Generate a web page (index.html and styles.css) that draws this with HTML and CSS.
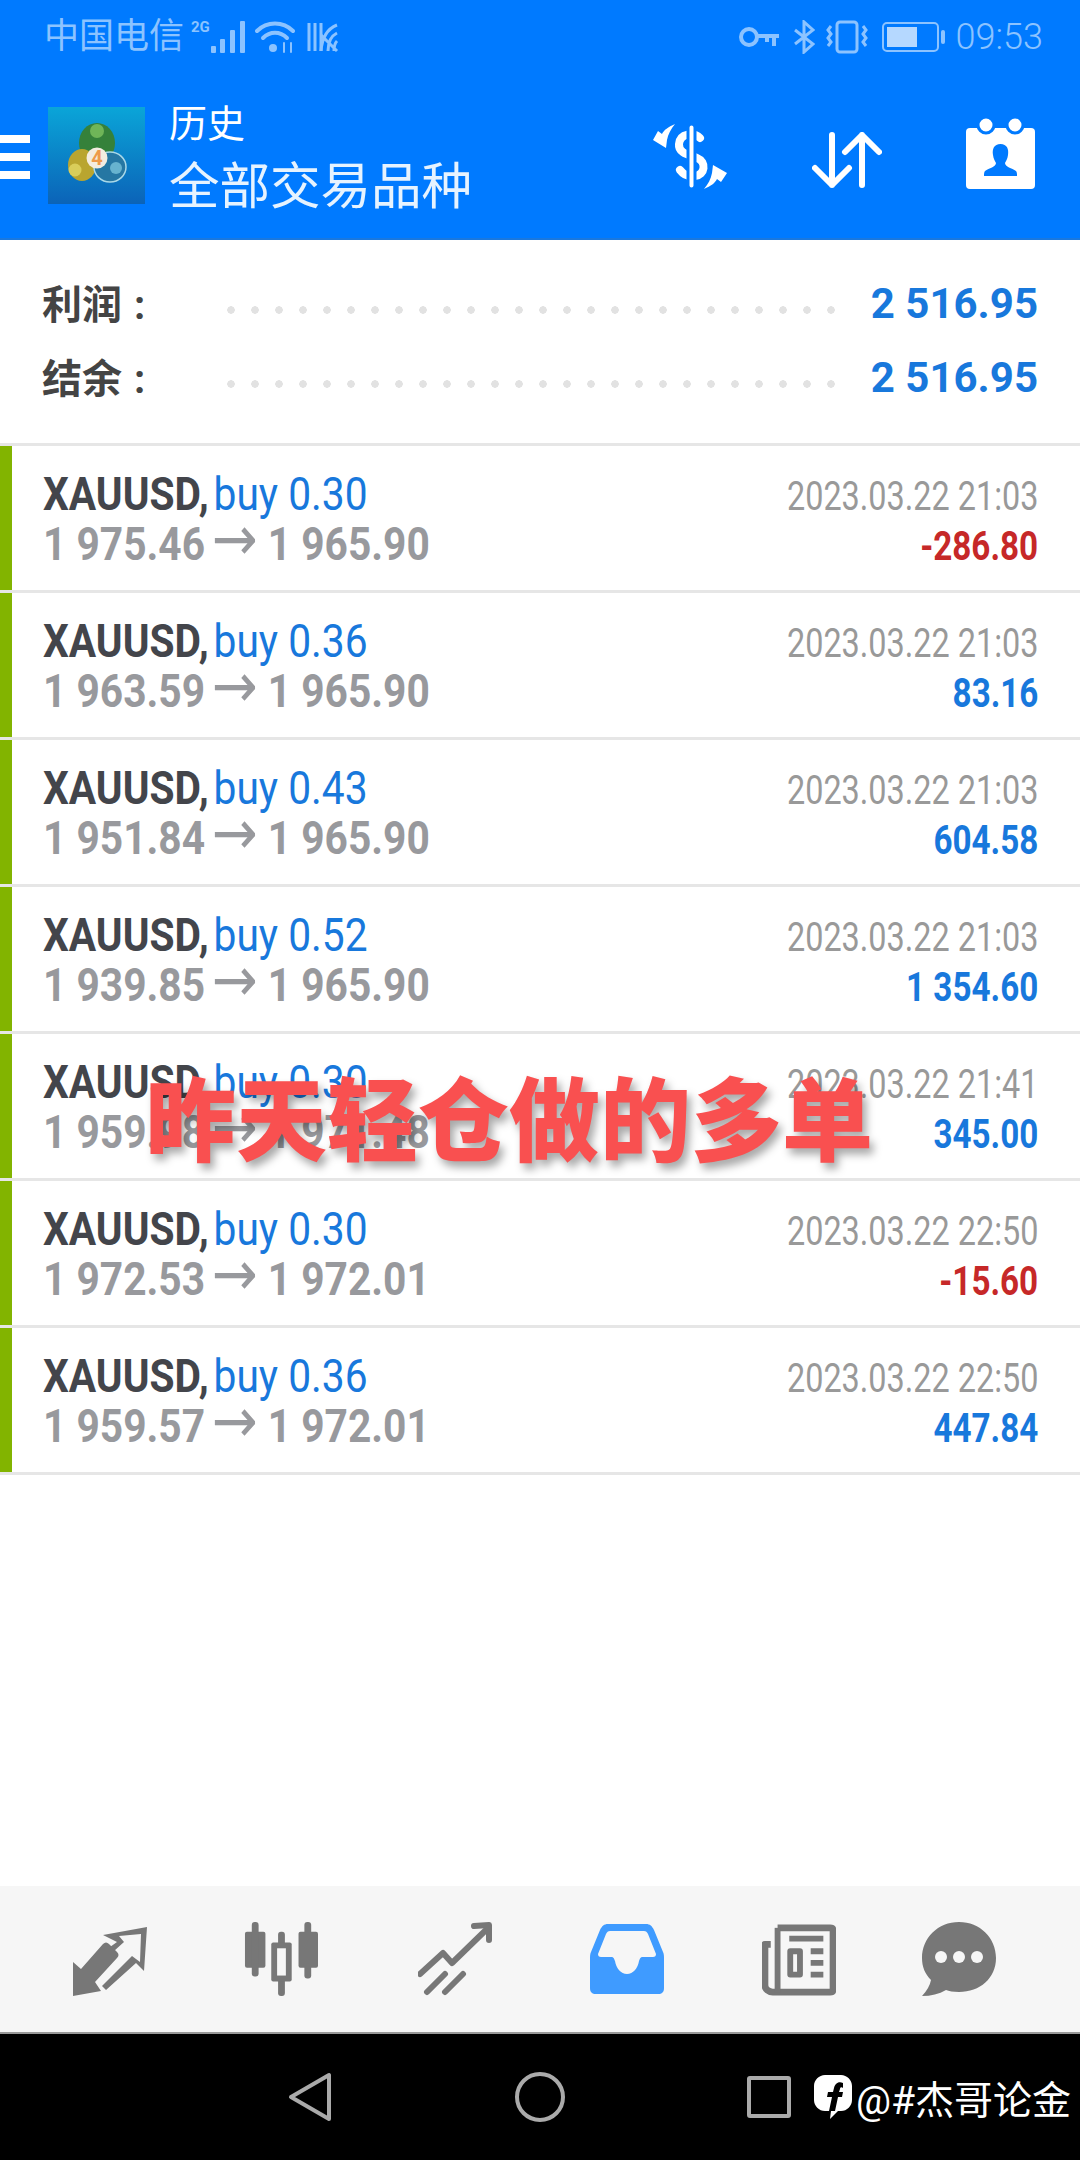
FILE: index.html
```html
<!DOCTYPE html>
<html lang="zh-CN">

<head>
    <meta charset="UTF-8">
    <meta name="viewport" content="width=device-width, initial-scale=1.0">
    <title>历史</title>
    <link rel="stylesheet" href="styles.css">
</head>

<body>
    <div class="phone">
        <!-- Barra de status -->
        <div class="status-bar">
            <div class="status-group">
                <span class="carrier">中国电信</span>
                <span class="net-type">2G</span>
                <svg class="st-signal" viewBox="0 0 34 32" fill="currentColor">
                    <rect x="0" y="25" width="5" height="7" rx="1" />
                    <rect x="9" y="18" width="5" height="14" rx="1" />
                    <rect x="19" y="9" width="5" height="23" rx="1" />
                    <rect x="29" y="0" width="5" height="32" rx="1" />
                </svg>
                <svg class="st-wifi" viewBox="0 0 42 34" fill="none" stroke="currentColor" stroke-width="4" stroke-linecap="round">
                    <path d="M2 11C12 1 28 1 38 11" />
                    <path d="M8 18C15 11 25 11 32 18" />
                    <circle cx="18" cy="28" r="4" fill="currentColor" stroke="none" />
                    <path d="M29 23v9M36 23v9" stroke-width="2" />
                </svg>
                <svg class="st-nfc" viewBox="0 0 32 32" fill="none" stroke="currentColor" stroke-width="3">
                    <path d="M2 2V30M8 2V30M14 2L14 30" />
                    <path d="M30 4C20 8 15 16 14 30M30 12C24 15 21 22 21 30M30 20C28 22 27 26 27 30M14 14L30 30" />
                </svg>
            </div>
            <div class="status-group status-right">
                <svg class="st-key" viewBox="0 0 42 22" fill="none" stroke="currentColor" stroke-width="4">
                    <circle cx="11" cy="11" r="8" />
                    <path d="M19 10H41M36 10V20M29 10V16" />
                </svg>
                <svg class="st-bt" viewBox="0 0 22 34" fill="none" stroke="currentColor" stroke-width="3">
                    <path d="M2 10L20 24L11 32V2L20 10L2 24" />
                </svg>
                <svg class="st-vib" viewBox="0 0 44 34" fill="none" stroke="currentColor" stroke-width="3">
                    <rect x="12" y="2" width="20" height="30" rx="3" />
                    <path d="M6 6l-3 4l3 4l-3 4l3 4l-3 4M38 6l3 4l-3 4l3 4l-3 4l3 4" />
                </svg>
                <div class="battery"><div class="battery-fill"></div></div>
                <span class="clock">09:53</span>
            </div>
        </div>

        <!-- Barra do app -->
        <header class="app-bar">
            <div class="menu-icon"><i></i><i></i><i></i></div>
            <svg class="app-logo" viewBox="0 0 97 97">
                <defs>
                    <linearGradient id="logo-bg" x1="0" y1="0" x2="0" y2="1">
                        <stop offset="0" stop-color="#0aa5d8" />
                        <stop offset="1" stop-color="#0b63b8" />
                    </linearGradient>
                </defs>
                <rect width="97" height="97" fill="url(#logo-bg)" />
                <ellipse cx="49" cy="36" rx="18" ry="20" fill="#35813a" />
                <circle cx="49" cy="24" r="7" fill="#6fb558" />
                <ellipse cx="34" cy="58" rx="14" ry="16" fill="#b9a52f" />
                <circle cx="27" cy="63" r="6.500" fill="#d9cd5a" />
                <ellipse cx="62" cy="60" rx="16" ry="15" fill="#2677a3" stroke="#a9d8e8" stroke-width="1.500" />
                <circle cx="68" cy="61" r="6" fill="#67b3cf" />
                <circle cx="49" cy="51" r="10.500" fill="#f3ece0" />
                <text class="logo-four" x="49" y="58" text-anchor="middle">4</text>
            </svg>
            <div class="app-titles">
                <div class="app-title-small">历史</div>
                <div class="app-title-big">全部交易品种</div>
            </div>
            <div class="app-actions">
                <svg class="act-dollar" viewBox="0 0 75 65" fill="#fff">
                    <path d="M47 14C41 8 27 9 26 20C25 29 36 31 44 34C54 38 52 51 42 52C35 53 30 50 27 46" fill="none" stroke="#fff" stroke-width="8" stroke-linecap="round" />
                    <rect x="35" y="0" width="7" height="65" rx="3.500" stroke="#007aff" stroke-width="3" />
                    <path d="M22 0C15 3 11 6 9 10L5 7L0 16L13 24L14 16C15 10 18 5 22 0Z" />
                    <path d="M51 65C58 62 62 59 64 55L68 58L74 49L60 41L59 49C58 55 55 60 51 65Z" />
                </svg>
                <svg class="act-sort" viewBox="0 0 70 56" fill="none" stroke="#fff" stroke-width="6" stroke-linecap="round" stroke-linejoin="round">
                    <path d="M20 3V53M3 36L20 53L37 36" />
                    <path d="M50 3V53M33 20L50 3L67 20" />
                </svg>
                <svg class="act-cal" viewBox="0 0 71 71" fill="#fff">
                    <rect x="1" y="10" width="69" height="61" rx="4" />
                    <circle cx="21" cy="7" r="8" stroke="#007aff" stroke-width="3" />
                    <circle cx="50" cy="7" r="8" stroke="#007aff" stroke-width="3" />
                    <path d="M35.500 26C42 26 44 31 43 37C42.500 41 41 43 40 45C40 49 47 50 51 53C52 54 52 56 52 58H19C19 56 19 54 20 53C24 50 31 49 31 45C30 43 28.500 41 28 37C27 31 29 26 35.500 26Z" fill="#007aff" />
                </svg>
            </div>
        </header>

        <!-- Resumo -->
        <section class="summary">
            <div class="summary-row">
                <span class="summary-label">利润 :</span>
                <span class="summary-dots"></span>
                <span class="summary-value">2 516.95</span>
            </div>
            <div class="summary-row">
                <span class="summary-label">结余 :</span>
                <span class="summary-dots"></span>
                <span class="summary-value">2 516.95</span>
            </div>
        </section>

        <!-- Lista de ordens -->
        <section class="deals">
            <div class="deal">
                <div class="deal-bar"></div>
                <div class="deal-body">
                    <div class="line"><span class="cond"><b class="symbol">XAUUSD,</b> <span class="side">buy 0.30</span></span><span class="cond-r date">2023.03.22 21:03</span></div>
                    <div class="line"><span class="cond price">1 975.46 <span class="arrow">→</span> 1 965.90</span><span class="cond-r pnl loss">-286.80</span></div>
                </div>
            </div>
            <div class="deal">
                <div class="deal-bar"></div>
                <div class="deal-body">
                    <div class="line"><span class="cond"><b class="symbol">XAUUSD,</b> <span class="side">buy 0.36</span></span><span class="cond-r date">2023.03.22 21:03</span></div>
                    <div class="line"><span class="cond price">1 963.59 <span class="arrow">→</span> 1 965.90</span><span class="cond-r pnl">83.16</span></div>
                </div>
            </div>
            <div class="deal">
                <div class="deal-bar"></div>
                <div class="deal-body">
                    <div class="line"><span class="cond"><b class="symbol">XAUUSD,</b> <span class="side">buy 0.43</span></span><span class="cond-r date">2023.03.22 21:03</span></div>
                    <div class="line"><span class="cond price">1 951.84 <span class="arrow">→</span> 1 965.90</span><span class="cond-r pnl">604.58</span></div>
                </div>
            </div>
            <div class="deal">
                <div class="deal-bar"></div>
                <div class="deal-body">
                    <div class="line"><span class="cond"><b class="symbol">XAUUSD,</b> <span class="side">buy 0.52</span></span><span class="cond-r date">2023.03.22 21:03</span></div>
                    <div class="line"><span class="cond price">1 939.85 <span class="arrow">→</span> 1 965.90</span><span class="cond-r pnl">1 354.60</span></div>
                </div>
            </div>
            <div class="deal">
                <div class="deal-bar"></div>
                <div class="deal-body">
                    <div class="line"><span class="cond"><b class="symbol">XAUUSD,</b> <span class="side">buy 0.30</span></span><span class="cond-r date">2023.03.22 21:41</span></div>
                    <div class="line"><span class="cond price">1 959.98 <span class="arrow">→</span> 1 971.48</span><span class="cond-r pnl">345.00</span></div>
                </div>
            </div>
            <div class="deal">
                <div class="deal-bar"></div>
                <div class="deal-body">
                    <div class="line"><span class="cond"><b class="symbol">XAUUSD,</b> <span class="side">buy 0.30</span></span><span class="cond-r date">2023.03.22 22:50</span></div>
                    <div class="line"><span class="cond price">1 972.53 <span class="arrow">→</span> 1 972.01</span><span class="cond-r pnl loss">-15.60</span></div>
                </div>
            </div>
            <div class="deal">
                <div class="deal-bar"></div>
                <div class="deal-body">
                    <div class="line"><span class="cond"><b class="symbol">XAUUSD,</b> <span class="side">buy 0.36</span></span><span class="cond-r date">2023.03.22 22:50</span></div>
                    <div class="line"><span class="cond price">1 959.57 <span class="arrow">→</span> 1 972.01</span><span class="cond-r pnl">447.84</span></div>
                </div>
            </div>
            <div class="overlay-text">昨天轻仓做的多单</div>
        </section>

        <!-- Navegação do app -->
        <nav class="tab-bar">
            <svg viewBox="0 0 74 74" fill="#777">
                <path d="M0 74L0 40L8 47L30 22C32 20 34 20 36 22L44 30C46 32 46 34 44 36L22 60L28 69Z" />
                <path d="M30 13L74 5L71 49L63 41L33 68L29 64L59 34L67 40L68 12L46 14L51 20L41 29L37 25L44 20Z" />
            </svg>
            <svg viewBox="0 0 76 76" fill="#777">
                <rect x="1" y="10" width="21" height="37" rx="2" />
                <rect x="8" y="0" width="7" height="56" rx="3" />
                <rect x="56" y="10" width="20" height="37" rx="2" />
                <rect x="62" y="0" width="7" height="58" rx="3" />
                <rect x="35" y="10" width="7" height="66" rx="3" />
                <rect x="28" y="21" width="21" height="40" rx="2" />
                <rect x="34" y="27" width="9" height="28" fill="#f6f6f6" />
            </svg>
            <svg viewBox="0 0 74 74" fill="none" stroke="#777" stroke-width="6" stroke-linecap="round" stroke-linejoin="round">
                <path d="M2 52L25 31L34 41L70 6" />
                <path d="M56 4L71 3V18" />
                <path d="M9 70L27 52M27 70L45 52" />
            </svg>
            <svg viewBox="0 0 74 70" fill="#3f9bff">
                <path d="M18 0H56C60 0 62 2 64 6L73 28C74 30 74 32 74 35V64C74 68 72 70 68 70H6C2 70 0 68 0 64V35C0 32 0 30 1 28L10 6C12 2 14 0 18 0Z" />
                <path d="M20 7H54C56 7 57 8 58 10L66 30C66 32 65 33 63 33H53C50 33 50 35 49 37C48 44 43 50 37 50C31 50 26 44 25 37C24 35 24 33 21 33H11C9 33 8 32 8 30L16 10C17 8 18 7 20 7Z" fill="#f6f6f6" />
            </svg>
            <svg viewBox="0 0 76 74" fill="none" stroke="#777" stroke-width="7" stroke-linejoin="round">
                <path d="M16 5H70C72 5 73 6 73 8V68C73 70 72 71 70 71H11C7 71 3 68 3 64V22H9" />
                <path d="M16 5V71" stroke-width="6" />
                <path d="M28 16H63" stroke-width="6" />
                <rect x="29" y="29" width="10" height="24" stroke-width="6" />
                <path d="M50 29H63M50 41H63M50 53H63" stroke-width="6" />
            </svg>
            <svg viewBox="0 0 74 74" fill="#777">
                <path d="M37 0C58 0 74 16 74 36C74 56 58 70 37 70C31 70 27 69 24 68C17 72 9 74 0 74C5 69 8 63 9 58C3 52 0 45 0 36C0 16 16 0 37 0Z" />
                <circle cx="19" cy="35" r="6" fill="#f6f6f6" />
                <circle cx="37" cy="35" r="6" fill="#f6f6f6" />
                <circle cx="55" cy="35" r="6" fill="#f6f6f6" />
            </svg>
        </nav>

        <!-- Navegação do sistema -->
        <div class="sys-bar">
            <svg class="sys-back" viewBox="0 0 44 50" fill="none" stroke="#aaa" stroke-width="4" stroke-linejoin="round">
                <path d="M41 3V47L3 25Z" />
            </svg>
            <div class="sys-home"></div>
            <div class="sys-recent"></div>
            <div class="watermark">
                <svg class="wm-icon" viewBox="0 0 38 44">
                    <path d="M11 0H27C33 0 38 5 38 11V25C38 31 33 36 27 36H24L16 44L17 36H11C5 36 0 31 0 25V11C0 5 5 0 11 0Z" fill="#fff" />
                    <path d="M29 8C24 6 21 9 20 13L19 17H14L13 22H18L15 36H21L24 22H28L29 17H25L26 14C26 12 28 12 29 13Z" fill="#000" />
                </svg>
                <span class="wm-text">@#杰哥论金</span>
            </div>
        </div>
    </div>
</body>

</html>
```

FILE: styles.css
```css
* {
    box-sizing: border-box;
}

body {
    margin: 0;
    background-color: #fff;
    font-family: Roboto, "Noto Sans CJK SC", sans-serif;
}

.phone {
    width: 1080px;
    height: 2160px;
    display: flex;
    flex-direction: column;
    overflow: hidden;
}

/* status bar */
.status-bar {
    height: 72px;
    padding: 2px 37px 0 44px;
    background-color: #007aff;
    color: #8cc3ff;
    display: flex;
    justify-content: space-between;
    align-items: center;
}

.status-group {
    display: flex;
    align-items: center;
}

.carrier {
    font-size: 35px;
    line-height: 40px;
}

.net-type {
    font-size: 15px;
    font-weight: 700;
    margin: 0 0 20px 7px;
}

.st-signal {
    width: 34px;
    height: 32px;
    margin: 0 10px 0 1px;
}

.st-wifi {
    width: 42px;
    height: 34px;
    margin-right: 10px;
}

.st-nfc {
    width: 32px;
    height: 32px;
}

.st-key {
    width: 42px;
    height: 22px;
    margin-right: 13px;
}

.st-bt {
    width: 22px;
    height: 34px;
    margin-right: 10px;
}

.st-vib {
    width: 44px;
    height: 34px;
    margin-right: 13px;
}

.battery {
    width: 57px;
    height: 30px;
    border: 2px solid #8cc3ff;
    border-radius: 5px;
    padding: 3px;
    margin-right: 17px;
    position: relative;
}

.battery::after {
    content: "";
    position: absolute;
    right: -8px;
    top: 6px;
    width: 4px;
    height: 14px;
    background-color: #8cc3ff;
    border-radius: 2px;
}

.battery-fill {
    width: 30px;
    height: 20px;
    background-color: #b5d8ff;
}

.clock {
    font-size: 36px;
    font-weight: 300;
}

/* app bar */
.app-bar {
    height: 168px;
    background-color: #007aff;
    border-bottom: 2px solid #1a78de;
    display: flex;
    align-items: flex-start;
    color: #fff;
}

.menu-icon {
    width: 30px;
    margin: 63px 18px 0 0;
    display: flex;
    flex-direction: column;
    gap: 10px;
}

.menu-icon i {
    display: block;
    height: 8px;
    background-color: #fff;
}

.app-logo {
    width: 97px;
    height: 97px;
    margin-top: 35px;
}

.logo-four {
    font-size: 20px;
    font-weight: 700;
    fill: #ee9a4a;
}

.app-titles {
    margin: 25px 0 0 24px;
}

.app-title-small {
    font-size: 38px;
    line-height: 54px;
    margin-bottom: 5px;
}

.app-title-big {
    font-size: 50.500px;
    line-height: 62px;
    color: #e6f3ff;
}

.app-actions {
    margin-left: auto;
    padding: 46px 44px 0 0;
    display: flex;
    align-items: flex-start;
}

.act-dollar {
    width: 75px;
    height: 65px;
    margin: 6px 84px 0 0;
}

.act-sort {
    width: 70px;
    height: 56px;
    margin: 14px 83px 0 0;
}

.act-cal {
    width: 71px;
    height: 71px;
}

/* resumo */
.summary {
    height: 206px;
    padding: 25px 42px 0;
    border-bottom: 3px solid #e6e6e6;
}

.summary-row {
    height: 74px;
    display: flex;
    align-items: center;
}

.summary-label {
    width: 177px;
    font-size: 40px;
    font-weight: 700;
    word-spacing: 2px;
    color: #444;
}

.summary-dots {
    width: 624px;
    height: 8px;
    margin-top: 15px;
    background-image: radial-gradient(circle, #e2e2e2 3.5px, transparent 4px);
    background-size: 24px 8px;
}

.summary-value {
    margin-left: auto;
    font-size: 42px;
    font-weight: 700;
    margin-top: 2px;
    color: #1878dc;
}

/* lista */
.deals {
    flex: 1;
    position: relative;
}

.deal {
    height: 147px;
    display: flex;
    border-bottom: 3px solid #e6e6e6;
}

.deal-bar {
    width: 12px;
    background-color: #82b400;
}

.deal-body {
    flex: 1;
    padding: 21px 42px 0 31px;
}

.line {
    height: 50px;
    display: flex;
    justify-content: space-between;
    align-items: baseline;
    white-space: nowrap;
}

.cond {
    display: inline-block;
    font-size: 46px;
    transform: scaleX(0.885);
    transform-origin: left center;
}

.cond-r {
    display: inline-block;
    transform-origin: right center;
}

.symbol {
    font-weight: 700;
    color: #43454b;
}

.side {
    margin-left: -6px;
    color: #1878dc;
}

.price {
    font-weight: 700;
    color: #98999d;
}

.arrow {
    margin-left: -4px;
    font-family: "DejaVu Sans", sans-serif;
    font-weight: 400;
    font-size: 62px;
    line-height: 0;
}

.date {
    font-size: 40px;
    color: #999;
    transform: scaleX(0.81);
}

.pnl {
    font-size: 40px;
    font-weight: 700;
    color: #1878dc;
    transform: scaleX(0.83);
}

.loss {
    color: #c62828;
}

.overlay-text {
    position: absolute;
    left: 145px;
    top: 627px;
    font-size: 91px;
    line-height: 100px;
    font-weight: 900;
    color: #f95050;
    text-shadow: 4px 6px 8px rgba(0, 0, 0, 0.35);
    white-space: nowrap;
}

/* tab bar */
.tab-bar {
    height: 146px;
    background-color: #f6f6f6;
    padding: 36px 0 0 73px;
    display: grid;
    grid-template-columns: 171px 174px 172px 172px 160px 74px;
    align-items: start;
}

.tab-bar svg {
    width: 74px;
    height: 74px;
}

/* barra do sistema */
.sys-bar {
    height: 128px;
    background-color: #000;
    border-top: 2px solid #999;
    display: flex;
    align-items: center;
    position: relative;
}

.sys-back {
    width: 44px;
    height: 50px;
    margin-left: 288px;
}

.sys-home {
    width: 50px;
    height: 50px;
    margin-left: 183px;
    border: 4px solid #aaa;
    border-radius: 50%;
}

.sys-recent {
    width: 44px;
    height: 42px;
    margin-left: 182px;
    border: 4px solid #aaa;
    border-radius: 3px;
}

.watermark {
    margin-left: 23px;
    display: flex;
    align-items: center;
    gap: 4px;
    color: #fff;
}

.wm-icon {
    width: 38px;
    height: 44px;
}

.wm-text {
    font-size: 39px;
    white-space: nowrap;
}
```
